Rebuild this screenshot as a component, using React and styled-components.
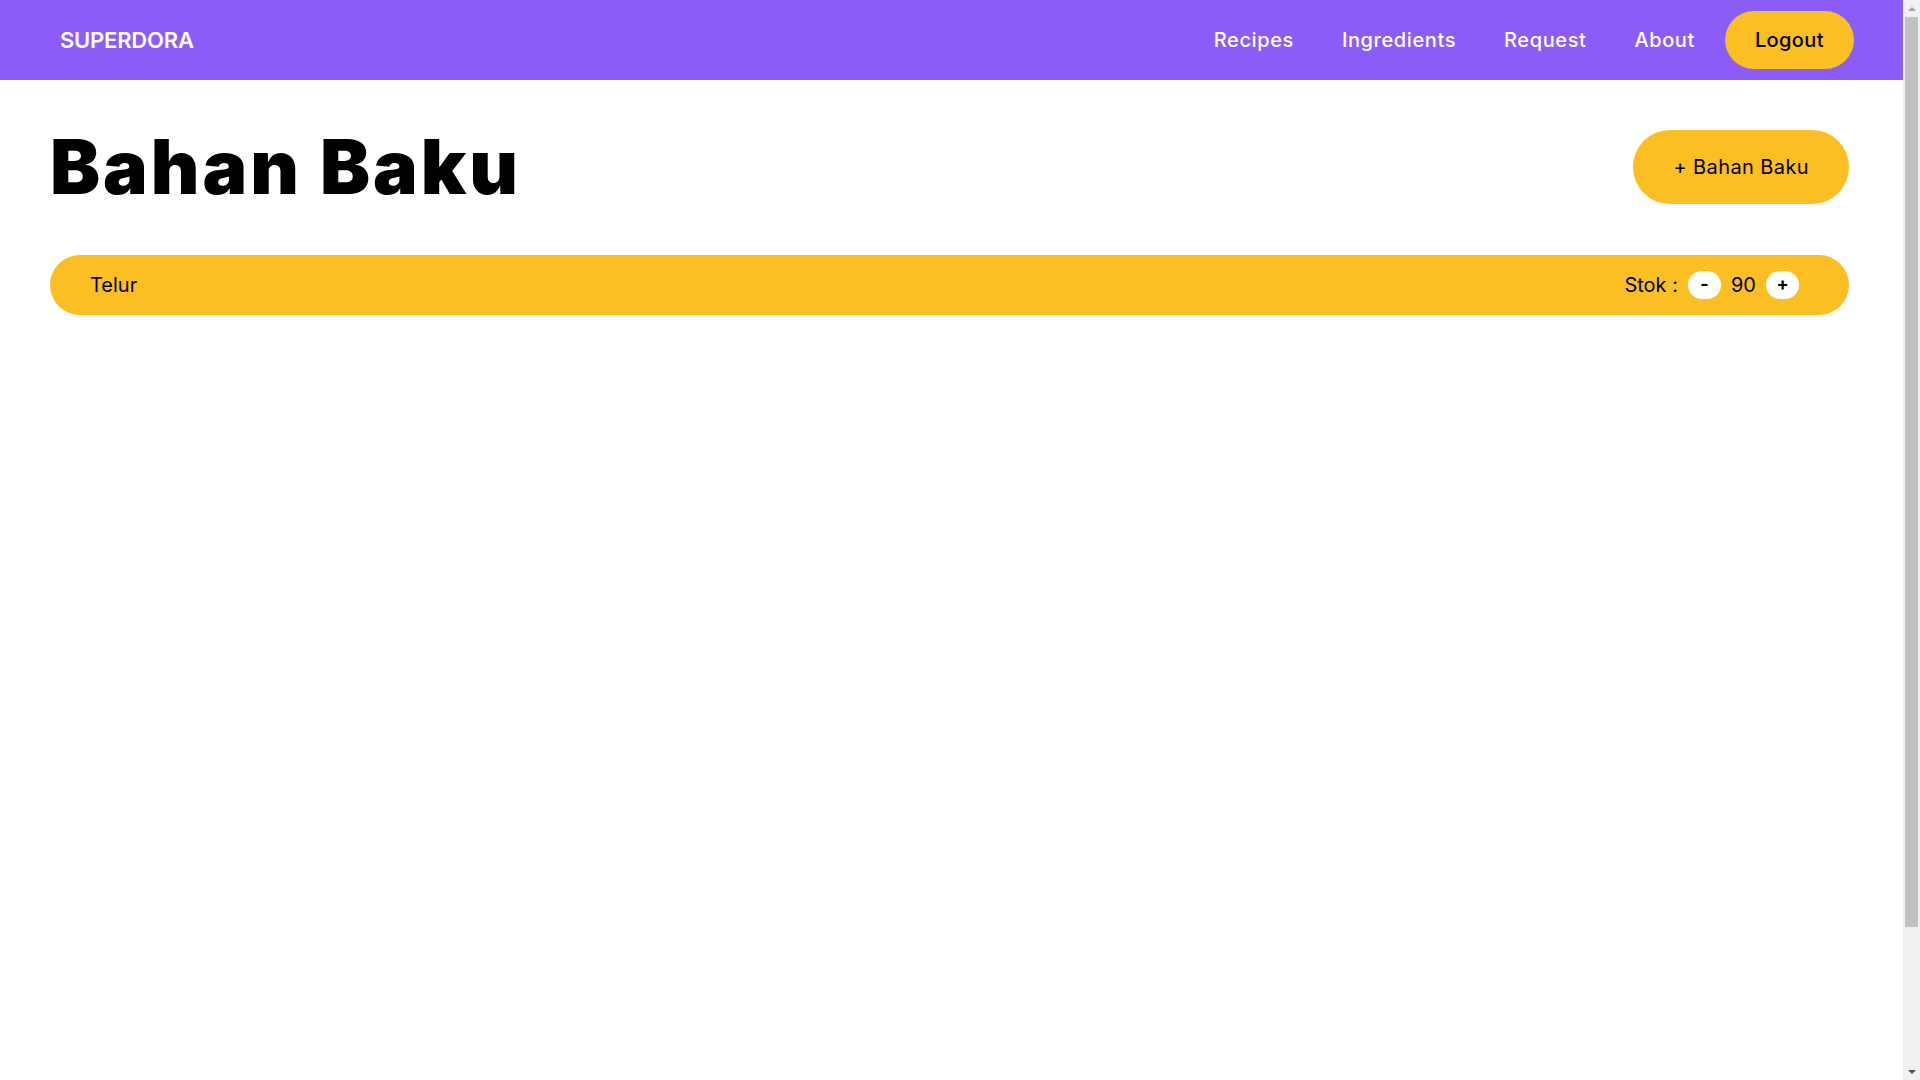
import React, { useState } from 'react'
import styled, { createGlobalStyle } from 'styled-components'

const GlobalStyle = createGlobalStyle`
  html, body {
    margin: 0;
    padding: 0;
    background: #ffffff;
    font-family: Inter, 'Open Sans', sans-serif;
    color: #000000;
  }

  * {
    box-sizing: border-box;
  }
`

const navItems = ['Recipes', 'Ingredients', 'Request', 'About']

const Page = styled.div`
  padding-right: 17px;
`

const NavBar = styled.nav`
  display: flex;
  align-items: center;
  justify-content: space-between;
  height: 80px;
  padding: 0 49px 0 60px;
  background-color: #8b5cf6;
`

const Brand = styled.div`
  color: #ffffff;
  font-size: 22px;
  font-weight: 600;
  letter-spacing: -0.2px;
`

const NavLinks = styled.div`
  display: flex;
  align-items: center;
`

const NavLink = styled.a`
  padding: 0 24px;
  color: #ffffff;
  font-size: 20px;
  font-weight: 500;
  letter-spacing: 0.6px;
  text-decoration: none;
  cursor: pointer;
`

const PillButton = styled.button`
  border: none;
  border-radius: 999px;
  background-color: #fbbf24;
  color: #000000;
  font-family: inherit;
  font-size: 20px;
  font-weight: ${({ bold }) => (bold ? 500 : 400)};
  letter-spacing: 0.4px;
  line-height: 28px;
  padding: ${({ big }) => (big ? '23px 40px' : '15px 30px')};
  margin-left: ${({ big }) => (big ? '0' : '6px')};
  cursor: pointer;
`

const Main = styled.main`
  padding: 50px 54px 0 50px;
`

const Header = styled.div`
  display: flex;
  align-items: center;
  justify-content: space-between;
`

const Title = styled.h1`
  margin: 0;
  font-size: 75px;
  font-weight: 900;
  line-height: 72px;
  letter-spacing: 3px;
`

const List = styled.div`
  display: flex;
  flex-direction: column;
  gap: 16px;
  margin-top: 51px;
`

const Row = styled.div`
  display: flex;
  align-items: center;
  justify-content: space-between;
  height: 60px;
  padding: 0 50px 0 40px;
  border-radius: 30px;
  background-color: #fbbf24;
  font-size: 20px;
`

const Stock = styled.div`
  display: flex;
  align-items: center;
  gap: 10px;
`

const Count = styled.span`
  min-width: 24px;
  text-align: center;
`

const StepButton = styled.button`
  display: flex;
  align-items: center;
  justify-content: center;
  width: 33px;
  height: 28px;
  padding: 0 0 2px;
  border: none;
  border-radius: 14px;
  background-color: #ffffff;
  color: #000000;
  font-family: inherit;
  font-size: 18px;
  font-weight: 700;
  line-height: 1;
  cursor: pointer;
`

/* stand-in for the browser's classic scrollbar seen in the shot */
const Scrollbar = styled.div`
  position: fixed;
  top: 0;
  right: 0;
  display: flex;
  flex-direction: column;
  width: 17px;
  height: 100vh;
  background-color: #f1f1f1;
`

const ScrollArrow = styled.div`
  display: flex;
  align-items: center;
  justify-content: center;
  height: 17px;

  &::before {
    content: '';
    border-left: 4px solid transparent;
    border-right: 4px solid transparent;
    ${({ down }) => (down
      ? 'border-top: 4px solid #505050;'
      : 'border-bottom: 4px solid #a3a3a3;')}
  }
`

const Track = styled.div`
  flex: 1;
  padding: 0 2px;
`

const Thumb = styled.div`
  height: 87%;
  background-color: #c1c1c1;
`

export default function App() {
  const [items, setItems] = useState([{ name: 'Telur', stock: 90 }])

  const change = (index, delta) => {
    setItems(items.map((item, i) => (
      i === index ? { ...item, stock: Math.max(0, item.stock + delta) } : item
    )))
  }

  return (
    <Page>
      <GlobalStyle />
      <NavBar>
        <Brand>SUPERDORA</Brand>
        <NavLinks>
          {navItems.map(label => (
            <NavLink key={label}>{label}</NavLink>
          ))}
          <PillButton bold>Logout</PillButton>
        </NavLinks>
      </NavBar>
      <Main>
        <Header>
          <Title>Bahan Baku</Title>
          <PillButton big>+ Bahan Baku</PillButton>
        </Header>
        <List>
          {items.map((item, i) => (
            <Row key={item.name}>
              <span>{item.name}</span>
              <Stock>
                <span>Stok :</span>
                <StepButton onClick={() => change(i, -1)}>-</StepButton>
                <Count>{item.stock}</Count>
                <StepButton onClick={() => change(i, 1)}>+</StepButton>
              </Stock>
            </Row>
          ))}
        </List>
      </Main>
      <Scrollbar>
        <ScrollArrow />
        <Track>
          <Thumb />
        </Track>
        <ScrollArrow down />
      </Scrollbar>
    </Page>
  )
}
